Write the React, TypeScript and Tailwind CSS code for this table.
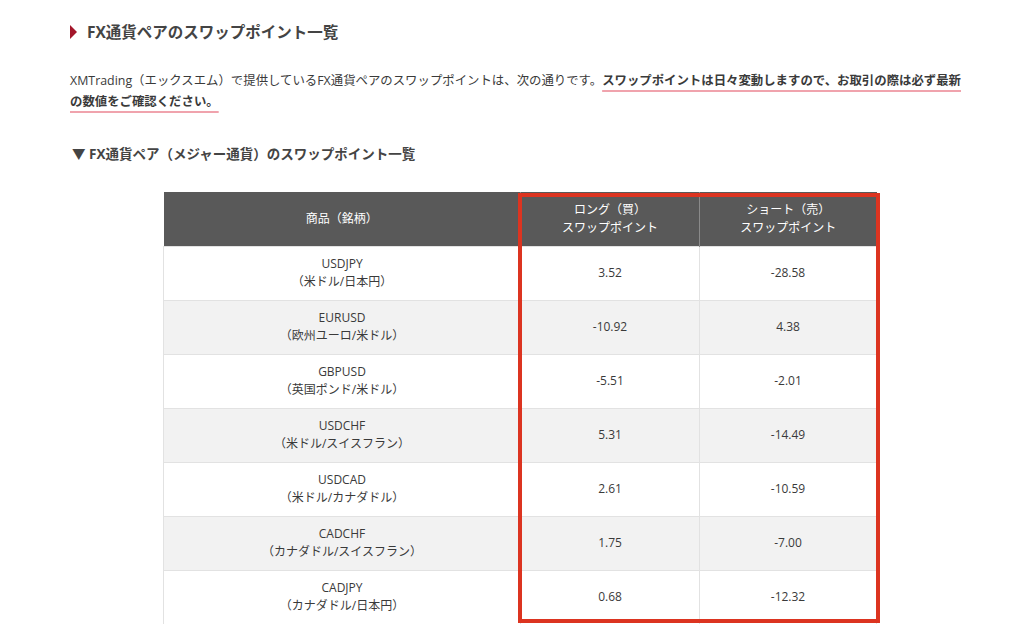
import React from 'react';

type Row = { code: string; name: string; long: string; short: string };

const rows: Row[] = [
  { code: 'USDJPY', name: '（米ドル/日本円）', long: '3.52', short: '-28.58' },
  { code: 'EURUSD', name: '（欧州ユーロ/米ドル）', long: '-10.92', short: '4.38' },
  { code: 'GBPUSD', name: '（英国ポンド/米ドル）', long: '-5.51', short: '-2.01' },
  { code: 'USDCHF', name: '（米ドル/スイスフラン）', long: '5.31', short: '-14.49' },
  { code: 'USDCAD', name: '（米ドル/カナダドル）', long: '2.61', short: '-10.59' },
  { code: 'CADCHF', name: '（カナダドル/スイスフラン）', long: '1.75', short: '-7.00' },
  { code: 'CADJPY', name: '（カナダドル/日本円）', long: '0.68', short: '-12.32' },
];

export default function App() {
  return (
    <div
      className="h-[624px] overflow-hidden bg-white text-[#3a3a3a]"
      style={{ fontFamily: '"Open Sans", "Noto Sans CJK JP", sans-serif' }}
    >
      <div className="w-[895px] ml-[70px] pt-[20px]">
        <h2 className="flex items-center gap-[10px] text-[15.5px] font-bold leading-[24px] text-[#444]">
          <span className="inline-block w-0 h-0 border-y-[7px] border-y-transparent border-l-[7px] border-l-[#a3162a]" />
          FX通貨ペアのスワップポイント一覧
        </h2>

        <p className="mt-[26px] text-[12.4px] leading-[21px]">
          XMTrading（エックスエム）で提供しているFX通貨ペアのスワップポイントは、次の通りです。
          <strong className="font-bold underline decoration-[#f0a3ad] decoration-2 underline-offset-[5px]">
            スワップポイントは日々変動しますので、お取引の際は必ず最新<br />の数値をご確認ください。
          </strong>
        </p>

        <h3 className="mt-[32px] text-[13.5px] font-bold leading-[20px] text-[#444] pl-[2px]">
          ▼ FX通貨ペア（メジャー通貨）のスワップポイント一覧
        </h3>

        <div className="relative mt-[28px] ml-[93px] w-[713px]">
          <table className="w-full table-fixed border-collapse text-[12px] leading-[18px] text-center">
            <colgroup>
              <col className="w-[357px]" />
              <col className="w-[179px]" />
              <col className="w-[177px]" />
            </colgroup>
            <thead>
              <tr className="h-[54px] bg-[#595959] text-white">
                <th className="font-normal border-r border-[#8a8a8a]">商品（銘柄）</th>
                <th className="font-normal border-r border-[#8a8a8a]">
                  ロング（買）
                  <br />
                  スワップポイント
                </th>
                <th className="font-normal">
                  ショート（売）
                  <br />
                  スワップポイント
                </th>
              </tr>
            </thead>
            <tbody>
              {rows.map((r, i) => (
                <tr key={r.code} className={`h-[54px] ${i % 2 === 1 ? 'bg-[#f2f2f2]' : 'bg-white'}`}>
                  <td className="border border-[#e2e2e2]">
                    {r.code}
                    <br />
                    {r.name}
                  </td>
                  <td className="border border-[#e2e2e2]">{r.long}</td>
                  <td className="border border-[#e2e2e2]">{r.short}</td>
                </tr>
              ))}
            </tbody>
          </table>
          <div className="absolute left-[355px] top-[1px] w-[362px] h-[430px] border-4 border-[#dc3420] pointer-events-none" />
        </div>
      </div>
    </div>
  );
}
